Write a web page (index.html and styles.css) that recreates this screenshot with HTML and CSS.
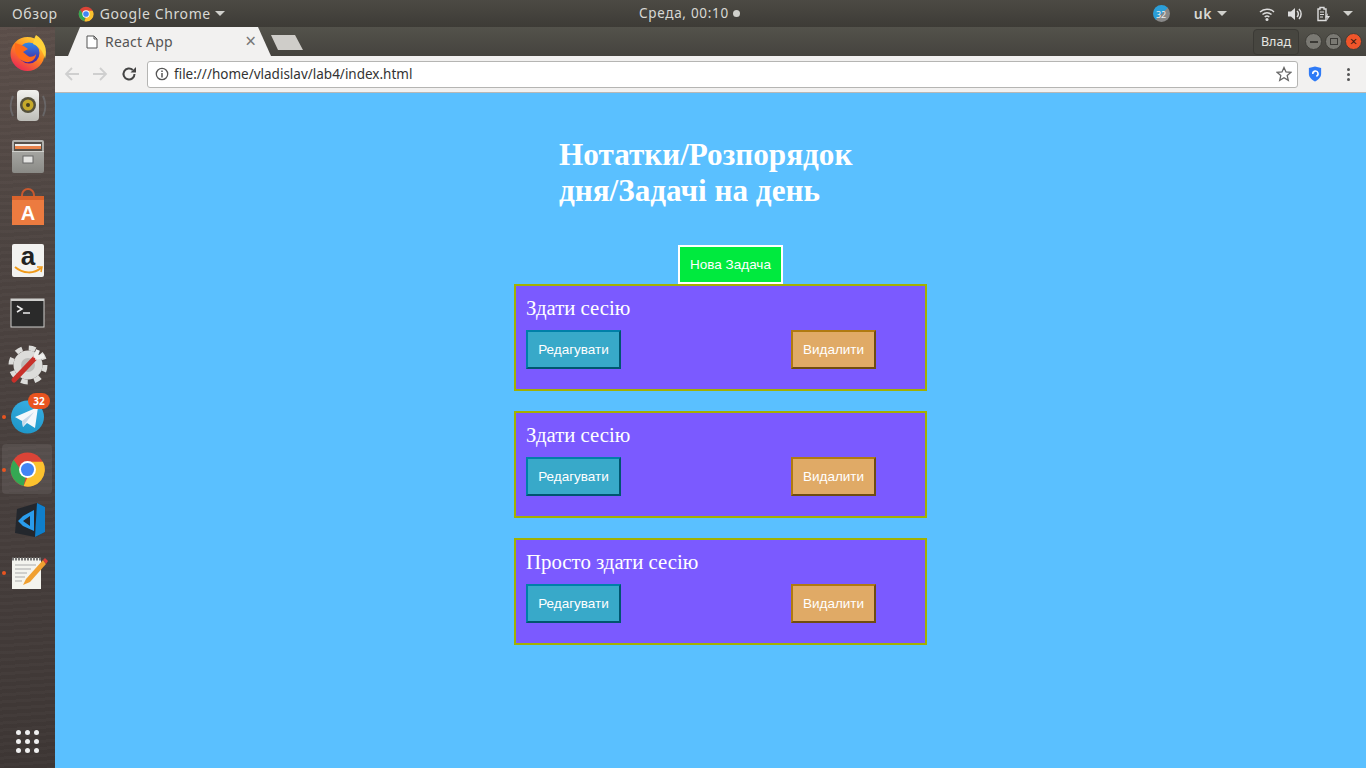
FILE: index.html
```html
<!DOCTYPE html>
<html lang="uk">
<head>
    <meta charset="UTF-8">
    <title>React App</title>
    <link rel="stylesheet" href="styles.css">
</head>
<body>
    <svg class="defs" width="0" height="0">
        <defs>
            <linearGradient id="fox" x1="0.8" y1="0" x2="0.2" y2="1">
                <stop offset="0" stop-color="#ffd93a"/>
                <stop offset="0.45" stop-color="#ff8a1e"/>
                <stop offset="1" stop-color="#e8205a"/>
            </linearGradient>
            <linearGradient id="globe" x1="0.5" y1="0" x2="0.5" y2="1">
                <stop offset="0" stop-color="#2f8ae8"/>
                <stop offset="1" stop-color="#4a1f9c"/>
            </linearGradient>
            <linearGradient id="metal" x1="0" y1="0" x2="0" y2="1">
                <stop offset="0" stop-color="#f2f2ee"/>
                <stop offset="1" stop-color="#bdbdb8"/>
            </linearGradient>
            <linearGradient id="cabinet" x1="0" y1="0" x2="0" y2="1">
                <stop offset="0" stop-color="#b4b4b0"/>
                <stop offset="1" stop-color="#8a8a86"/>
            </linearGradient>
            <linearGradient id="tg" x1="0.7" y1="0" x2="0.3" y2="1">
                <stop offset="0" stop-color="#37aee2"/>
                <stop offset="1" stop-color="#1e96c8"/>
            </linearGradient>
        </defs>
        <symbol id="chrome" viewBox="0 0 48 48">
            <circle cx="24" cy="24" r="22" fill="#db4437"/>
            <path d="M24 14 L44 14 A22 22 0 0 1 19 45.500 L24 34 Z" fill="#fbc22e"/>
            <path d="M24 24 L19 45.500 A22 22 0 0 1 6 11.500 L15 24 Z" fill="#34a853"/>
            <circle cx="24" cy="24" r="11" fill="#fff"/>
            <circle cx="24" cy="24" r="8.500" fill="#4285f4"/>
        </symbol>
    </svg>

    <header class="topbar">
        <span class="overview">Обзор</span>
        <span class="app-menu">
            <svg class="app-icon"><use href="#chrome"/></svg>
            Google Chrome
            <i class="caret"></i>
        </span>
        <span class="clock">Среда, 00:10<i class="clock-dot"></i></span>
        <div class="tray">
            <span class="tray-badge">32</span>
            <span class="lang">uk<i class="caret"></i></span>
            <svg class="tray-icon" viewBox="0 0 16 16"><path d="M1 6 A10 10 0 0 1 15 6 M3.500 8.500 A7 7 0 0 1 12.500 8.500 M5.700 11 A3.500 3.500 0 0 1 10.300 11" fill="none" stroke="#ddd" stroke-width="1.500"/><circle cx="8" cy="13.500" r="1.500" fill="#ddd"/></svg>
            <svg class="tray-icon" viewBox="0 0 16 16"><path d="M1 5.500 H4 L8 2 V14 L4 10.500 H1 Z" fill="#ddd"/><path d="M10 5 A4 4 0 0 1 10 11 M12 3 A7 7 0 0 1 12 13" fill="none" stroke="#ddd" stroke-width="1.500"/></svg>
            <svg class="tray-icon" viewBox="0 0 16 16"><path d="M3 3 H5 V1.500 H9 V3 H11 V14.500 H3 Z" fill="none" stroke="#ddd" stroke-width="1.400"/><path d="M5 6 H9 M5 8.500 H9 M5 11 H8" stroke="#ddd" stroke-width="1.200"/><path d="M13 7 L10 11.500 H12.500 L11.500 15 L15 10 H12.500 Z" fill="#ddd"/></svg>
            <i class="caret"></i>
        </div>
    </header>

    <div class="desktop">
        <nav class="dock">
            <div class="dock-item">
                <svg class="dock-icon" viewBox="0 0 48 48">
                    <circle cx="23.500" cy="25" r="17" fill="url(#fox)"/>
                    <circle cx="25" cy="24" r="10.500" fill="url(#globe)"/>
                    <path d="M32 6 C40 11 44 20 41 30 C39 21 34 17 29 15 C30 12 30 9 32 6 Z" fill="#ffd23a"/>
                    <path d="M11 14 C15 15 21 17 24 20 L19 23 L24 27 C27 29 31 27 32 25 C32 32 24 35 19 32 C13 29 10 22 11 14 Z" fill="#ff6a1a"/>
                </svg>
            </div>
            <div class="dock-item">
                <svg class="dock-icon" viewBox="0 0 48 48">
                    <path d="M9 15 C6 21 6 29 9 35 M39 15 C42 21 42 29 39 35" fill="none" stroke="#8a98a4" stroke-width="2" opacity="0.350"/>
                    <rect x="13" y="9" width="22" height="31" rx="4" fill="url(#metal)"/>
                    <circle cx="24" cy="24" r="8" fill="#55513c"/>
                    <circle cx="24" cy="24" r="5.500" fill="#c6aa2a"/>
                    <circle cx="24" cy="24" r="2" fill="#453f22"/>
                </svg>
            </div>
            <div class="dock-item">
                <svg class="dock-icon" viewBox="0 0 48 48">
                    <rect x="8" y="7" width="32" height="33" rx="2" fill="url(#cabinet)"/>
                    <rect x="10" y="9" width="28" height="9" fill="#55504a"/>
                    <rect x="11" y="11" width="26" height="2" fill="#f0f0ec"/>
                    <rect x="11" y="13" width="26" height="3" fill="#e8834a"/>
                    <rect x="8" y="18" width="32" height="1" fill="#d0d0cc"/>
                    <rect x="19" y="23" width="10" height="7" fill="#e4e4e2" stroke="#666" stroke-width="1"/>
                </svg>
            </div>
            <div class="dock-item">
                <svg class="dock-icon" viewBox="0 0 48 48">
                    <path d="M18 14 V10 A6 6 0 0 1 30 10 V14" fill="none" stroke="#c9592e" stroke-width="2"/>
                    <rect x="8" y="11" width="32" height="29" fill="#ec7b40"/>
                    <rect x="8" y="11" width="32" height="4" fill="#d9632c"/>
                    <text class="shop-letter" x="24" y="35" text-anchor="middle">A</text>
                </svg>
            </div>
            <div class="dock-item">
                <svg class="dock-icon" viewBox="0 0 48 48">
                    <rect x="8" y="7" width="32" height="33" rx="2" fill="#f2f2f0"/>
                    <text class="amazon-letter" x="24" y="28" text-anchor="middle">a</text>
                    <path d="M11 30 C19 37 30 37 37 31" fill="none" stroke="#f09a1a" stroke-width="2"/>
                    <path d="M33 30 L38 30 L37 35" fill="none" stroke="#f09a1a" stroke-width="1.500"/>
                </svg>
            </div>
            <div class="dock-item">
                <svg class="dock-icon" viewBox="0 0 48 48">
                    <rect x="7" y="10" width="33" height="28" fill="#2a2a2a" stroke="#cfcfcd" stroke-width="1"/>
                    <rect x="7" y="10" width="33" height="2" fill="#cfcfcd"/>
                    <path d="M13 17 L18 20 L13 23" fill="none" stroke="#eee" stroke-width="1.500"/>
                    <path d="M19 24 H26" stroke="#eee" stroke-width="1.500"/>
                </svg>
            </div>
            <div class="dock-item">
                <svg class="dock-icon" viewBox="0 0 48 48">
                    <circle cx="24" cy="24" r="17" fill="none" stroke="#dcdcda" stroke-width="5" stroke-dasharray="6.700 6.700"/>
                    <circle cx="24" cy="24" r="14.500" fill="#dcdcda"/>
                    <circle cx="24" cy="24" r="7" fill="#bcbcba"/>
                    <path d="M10 39 L31 17" stroke="#c8302a" stroke-width="5" stroke-linecap="round"/>
                    <path d="M31 17 L34 9 M31 17 L40 15" stroke="#efefed" stroke-width="4"/>
                </svg>
            </div>
            <div class="dock-item running">
                <svg class="dock-icon" viewBox="0 0 48 48">
                    <circle cx="23.500" cy="24" r="16.500" fill="url(#tg)"/>
                    <path d="M11 24 L34 14 L31 35 L23 30 L19 34 L18 28 Z" fill="#f4f8fb"/>
                    <path d="M18 28 L30 19 L22 29.500 L19 34 Z" fill="#c8daea"/>
                </svg>
                <span class="dock-badge">32</span>
            </div>
            <div class="dock-item running active">
                <svg class="chrome-icon"><use href="#chrome"/></svg>
            </div>
            <div class="dock-item">
                <svg class="dock-icon" viewBox="0 0 48 48">
                    <path d="M33 6 L41 10 V35 L31 40 L11 36 L13 12 Z" fill="#23272d"/>
                    <path d="M33 6 L41 10 V35 L31 40 Z" fill="#0f7fcb"/>
                    <path d="M14 24 L19 19 L30 13 V34 L19 29 Z M19 24 L26 29 V19 Z" fill="#2a9cec" fill-rule="evenodd"/>
                </svg>
            </div>
            <div class="dock-item running">
                <svg class="dock-icon" viewBox="0 0 48 48">
                    <rect x="8" y="9" width="29" height="31" fill="#f4f4ee"/>
                    <path d="M8 10 H37" stroke="#777" stroke-width="3" stroke-dasharray="2 1"/>
                    <path d="M11 16 H32 M11 20 H27 M11 24 H23 M11 28 H21 M11 32 H18" stroke="#aaa" stroke-width="1"/>
                    <path d="M39 11 L22 30 L19 36 L26 33 L42 15 Z" fill="#f0a030"/>
                    <path d="M39 11 L42 15 L44 12 L41 9 Z" fill="#d8403a"/>
                </svg>
            </div>
            <div class="dock-apps">
                <i></i><i></i><i></i><i></i><i></i><i></i><i></i><i></i><i></i>
            </div>
        </nav>

        <main class="browser">
            <div class="tabstrip">
                <div class="tab">
                    <svg class="tab-icon" viewBox="0 0 12 14"><path d="M1 1 H8 L11 4 V13 H1 Z M8 1 V4 H11" fill="#fff" stroke="#555" stroke-width="1"/></svg>
                    <span class="tab-title">React App</span>
                    <span class="tab-close">×</span>
                </div>
                <div class="new-tab"></div>
                <div class="user-chip">Влад</div>
                <div class="window-buttons">
                    <span class="win-btn"><i class="win-min"></i></span>
                    <span class="win-btn"><i class="win-max"></i></span>
                    <span class="win-btn win-close">×</span>
                </div>
            </div>

            <div class="toolbar">
                <svg class="nav-icon" viewBox="0 0 16 16"><path d="M15 8 H2 M8 2 L2 8 L8 14" fill="none" stroke="#cfcfcf" stroke-width="1.800"/></svg>
                <svg class="nav-icon" viewBox="0 0 16 16"><path d="M1 8 H14 M8 2 L14 8 L8 14" fill="none" stroke="#cfcfcf" stroke-width="1.800"/></svg>
                <svg class="nav-icon" viewBox="0 0 16 16"><path d="M13.500 8 A5.500 5.500 0 1 1 11.800 4" fill="none" stroke="#444" stroke-width="2"/><path d="M9.500 6.500 H15 V1 Z" fill="#444"/></svg>
                <div class="omnibox">
                    <svg class="info-icon" viewBox="0 0 14 14"><circle cx="7" cy="7" r="5.700" fill="none" stroke="#555" stroke-width="1.300"/><path d="M7 6 V10.500 M7 3.500 V5" stroke="#555" stroke-width="1.500"/></svg>
                    <span class="url">file:///home/vladislav/lab4/index.html</span>
                    <svg class="star-icon" viewBox="0 0 16 16"><path d="M8 1.500 L10 6 L14.800 6.400 L11.200 9.600 L12.300 14.400 L8 11.800 L3.700 14.400 L4.800 9.600 L1.200 6.400 L6 6 Z" fill="none" stroke="#666" stroke-width="1.300"/></svg>
                </div>
                <svg class="shield-icon" viewBox="0 0 16 18"><path d="M1 2 L8 0.500 L15 2 V9 C15 13 11 16 8 17.500 C5 16 1 13 1 9 Z" fill="#2f7bf6"/><path d="M5.500 9 A3 3 0 1 1 9.500 11.500" fill="none" stroke="#fff" stroke-width="1.800"/></svg>
                <div class="menu-dots"><i></i><i></i><i></i></div>
            </div>

            <div class="page">
                <div class="app">
                    <h1 class="title">Нотатки/Розпорядок дня/Задачі на день</h1>
                    <button class="btn btn-new">Нова Задача</button>
                    <div class="note">
                        <p class="note-text">Здати сесію</p>
                        <div class="note-actions">
                            <button class="btn btn-edit">Редагувати</button>
                            <button class="btn btn-delete">Видалити</button>
                        </div>
                    </div>
                    <div class="note">
                        <p class="note-text">Здати сесію</p>
                        <div class="note-actions">
                            <button class="btn btn-edit">Редагувати</button>
                            <button class="btn btn-delete">Видалити</button>
                        </div>
                    </div>
                    <div class="note">
                        <p class="note-text">Просто здати сесію</p>
                        <div class="note-actions">
                            <button class="btn btn-edit">Редагувати</button>
                            <button class="btn btn-delete">Видалити</button>
                        </div>
                    </div>
                </div>
            </div>
        </main>
    </div>
</body>
</html>
```

FILE: styles.css
```css
* { box-sizing: border-box; }
html, body { height: 100%; }
body { margin: 0; height: 768px; overflow: hidden; display: flex; flex-direction: column; font-family: "Noto Sans", "Open Sans", sans-serif; }
i { display: block; }
.defs { position: absolute; }

.topbar { height: 27px; flex: none; display: flex; align-items: center; position: relative; background: linear-gradient(#4c4a44, #3d3b36); color: #d8d8d4; font-size: 14px; letter-spacing: 0.6px; }
.overview { margin-left: 12px; }
.app-menu { margin-left: 20px; display: flex; align-items: center; gap: 4px; }
.app-icon { width: 16px; height: 16px; margin-right: 2px; }
.caret { width: 0; height: 0; border-left: 5px solid transparent; border-right: 5px solid transparent; border-top: 5px solid #d0d0cc; }
.clock { position: absolute; left: 639px; top: 4px; display: flex; align-items: center; gap: 4px; font-size: 13.5px; letter-spacing: 0.7px; }
.clock-dot { width: 7px; height: 7px; border-radius: 50%; background: #d0d0cc; }
.tray { margin-left: auto; display: flex; align-items: center; padding-right: 13px; }
.tray-badge { width: 17px; height: 17px; margin-right: 24px; border-radius: 50%; background: linear-gradient(135deg, #2a9ed8 50%, #888 50%); color: #eee; font-size: 9px; line-height: 19px; text-align: center; letter-spacing: 0; }
.lang { display: flex; align-items: center; gap: 5px; margin-right: 32px; font-weight: 600; }
.tray-icon { width: 16px; height: 16px; margin-right: 12px; }

.desktop { flex: 1; display: flex; min-height: 0; }
.dock { width: 55px; flex: none; display: flex; flex-direction: column; background: repeating-linear-gradient(176deg, rgba(255, 255, 255, 0.015) 0 3px, rgba(0, 0, 0, 0.02) 3px 7px), linear-gradient(#5c4f4a, #4d4441 30%, #463e3c 70%, #3e3735); }
.dock-item { height: 52px; flex: none; display: flex; align-items: center; justify-content: center; position: relative; }
.dock-icon { width: 48px; height: 48px; }
.chrome-icon { width: 37px; height: 37px; }
.running::before { content: ""; position: absolute; left: 2px; top: 24px; width: 4px; height: 4px; border-radius: 50%; background: #e95420; }
.active { margin: 1px 3px 1px 2px; height: 50px; border-radius: 4px; background: rgba(255, 255, 255, 0.08); }
.active.running::before { left: 0; }
.dock-badge { position: absolute; left: 28px; top: 2px; width: 22px; height: 16px; border-radius: 8px; background: #e95420; color: #fff; font-size: 10px; font-weight: 700; line-height: 16px; text-align: center; }
.shop-letter { font: 700 20px "Liberation Sans", sans-serif; fill: #fff; }
.amazon-letter { font: 700 26px "Liberation Sans", sans-serif; fill: #222; }
.dock-apps { margin: auto auto 15px; width: 23px; display: grid; grid-template-columns: repeat(3, 5px); gap: 4px; }
.dock-apps i { height: 5px; border-radius: 50%; background: #f0f0f0; }

.browser { flex: 1; min-width: 0; display: flex; flex-direction: column; }
.tabstrip { height: 29px; flex: none; display: flex; align-items: flex-end; background: linear-gradient(#53524b, #45433e); }
.tab { width: 203px; height: 29px; margin-left: 13px; display: flex; align-items: center; padding: 0 15px 0 18px; background: #f2f1f0; color: #555; font-size: 14px; clip-path: polygon(0 100%, 12px 0, 190px 0, 203px 100%); }
.tab-icon { width: 12px; height: 14px; flex: none; }
.tab-title { margin-left: 7px; letter-spacing: 0.2px; }
.tab-close { margin-left: auto; font-size: 19px; line-height: 1; color: #777; }
.new-tab { width: 32px; height: 15px; margin-bottom: 6px; background: #cfcdc9; clip-path: polygon(0 0, 24px 0, 32px 100%, 7px 100%); }
.user-chip { margin-left: auto; width: 46px; height: 26px; margin-bottom: 1px; border: 1px solid #3b3a35; border-radius: 4px; background: #474640; color: #e6e6e2; font-size: 12.5px; line-height: 24px; text-align: center; }
.window-buttons { display: flex; gap: 3px; margin: 0 4px 6px 6px; }
.win-btn { width: 17px; height: 17px; border-radius: 50%; background: #7a7973; border: 1px solid #3f3e39; display: flex; align-items: center; justify-content: center; }
.win-min { width: 8px; height: 2px; background: #3b3a36; }
.win-max { width: 8px; height: 7px; border: 1px solid #3b3a36; }
.win-close { background: #f0552a; color: #3a1a10; font-size: 13px; line-height: 1; }

.toolbar { height: 37px; flex: none; display: flex; align-items: center; padding: 0 9px; background: #f2f1f0; border-bottom: 1px solid #b8b8b6; }
.nav-icon { width: 16px; height: 16px; margin-right: 12px; }
.nav-icon:nth-child(3) { margin: 0 10px 0 1px; }
.omnibox { width: 1151px; height: 27px; display: flex; align-items: center; padding: 0 5px 0 7px; background: #fff; border: 1px solid #b5b5b3; border-radius: 3px; color: #333; font-size: 13.5px; }
.info-icon { width: 14px; height: 14px; flex: none; }
.url { margin-left: 5px; }
.star-icon { width: 16px; height: 16px; margin-left: auto; }
.shield-icon { width: 14px; height: 16px; margin-left: 10px; }
.menu-dots { margin-left: 25px; display: flex; flex-direction: column; gap: 2px; }
.menu-dots i { width: 3px; height: 3px; border-radius: 50%; background: #555; }

.page { flex: 1; background: #5ac0ff; padding-left: 459px; }
.app { width: 413px; }
.title { width: 320px; margin: 0 0 36px 45px; padding-top: 44px; color: #fff; font: 700 31.2px/36px "Liberation Serif", serif; }
.btn { display: block; padding: 0 9px; height: 39px; color: #fff; font: 13.5px "Liberation Sans", sans-serif; }
.btn-new { margin-left: 164px; width: 105px; background: #00ea3e; border: 2px solid #fff; }
.note { height: 107px; margin-bottom: 20px; padding: 9px 10px 10px; background: #7b5aff; border: 2px solid #a3b000; }
.note-text { margin: 0 0 10px; color: #fff; font: 20.8px/25px "Liberation Serif", serif; }
.note-actions { display: flex; }
.btn-edit { width: 95px; background: #38a9c9; border: 2px solid; border-color: #0080a8 #005570 #005570 #0080a8; }
.btn-delete { width: 85px; margin-left: 170px; background: #e0aa66; border: 2px solid; border-color: #b07a10 #704d10 #704d10 #b07a10; }
```
